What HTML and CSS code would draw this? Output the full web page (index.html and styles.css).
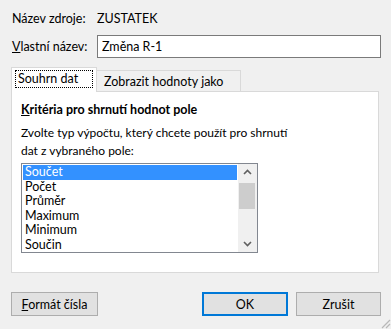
FILE: index.html
```html
<!DOCTYPE html>
<html lang="cs">
<head>
    <meta charset="UTF-8">
    <title>Nastavení pole hodnot</title>
    <link rel="stylesheet" href="styles.css">
</head>
<body>
    <main class="dialog">
        <div class="row source">
            <span class="label">Název zdroje:</span>
            <span>ZUSTATEK</span>
        </div>
        <div class="row name">
            <label class="label" for="custom-name"><u>V</u>lastní název:</label>
            <input id="custom-name" type="text" value="Změna R-1">
        </div>

        <div class="tabs">
            <div class="tab active"><span class="focus">Souhrn dat</span></div>
            <div class="tab">Zobrazit hodnoty jako</div>
        </div>
        <section class="panel">
            <h2><u>K</u>ritéria pro shrnutí hodnot pole</h2>
            <p>Zvolte typ výpočtu, který chcete použít pro shrnutí dat z vybraného pole:</p>
            <div class="listbox">
                <ul>
                    <li class="selected">Součet</li>
                    <li>Počet</li>
                    <li>Průměr</li>
                    <li>Maximum</li>
                    <li>Minimum</li>
                    <li>Součin</li>
                </ul>
                <div class="scrollbar">
                    <svg width="19" height="17" viewBox="0 0 19 17"><path d="M6 10 L9.5 6.5 L13 10" fill="none" stroke="#606060" stroke-width="1.6"/></svg>
                    <div class="thumb"></div>
                    <svg class="down" width="19" height="17" viewBox="0 0 19 17"><path d="M6 7 L9.5 10.5 L13 7" fill="none" stroke="#606060" stroke-width="1.6"/></svg>
                </div>
            </div>
        </section>

        <footer class="buttons">
            <button class="btn format"><u>F</u>ormát čísla</button>
            <div class="right">
                <button class="btn ok">OK</button>
                <button class="btn">Zrušit</button>
            </div>
        </footer>
        <svg class="grip" width="12" height="12" viewBox="0 0 12 12">
            <path d="M11 3 L3 11 M11 7 L7 11" stroke="#b8b8b8" stroke-width="1.2"/>
        </svg>
    </main>
</body>
</html>
```

FILE: styles.css
```css
*{
    box-sizing: border-box;
    margin: 0;
    padding: 0;
}
body{
    background-color: #f0f0f0;
    font-family: Lato, "Open Sans", sans-serif;
    font-size: 12.5px;
    color: #000;
}
.dialog{
    position: relative;
    width: 391px;
    height: 329px;
    padding: 11px 10px 0 11px;
}
.row{
    display: flex;
    align-items: center;
    line-height: 15px;
}
.label{
    width: 86px;
    flex-shrink: 0;
    padding-left: 1px;
}
.row.name{
    margin-top: 9px;
}
.row.name input{
    width: 284px;
    height: 23px;
    border: 1px solid #7a7a7a;
    background: #fff;
    font: inherit;
    padding-left: 4px;
    color: #000;
}
.tabs{
    display: flex;
    align-items: flex-end;
    margin-top: 9px;
    height: 24px;
    position: relative;
    z-index: 1;
}
.tab{
    height: 21px;
    border: 1px solid #d9d9d9;
    border-bottom: none;
    padding: 3px 6px 0;
    line-height: 15px;
    background-color: #f0f0f0;
}
.tab.active{
    width: 86px;
    height: 25px;
    margin-bottom: -1px;
    background-color: #fff;
    padding: 3px 4px 0;
}
.tab.active + .tab{
    border-left: none;
}
.tab:not(.active){
    width: 144px;
    padding-left: 7px;
}
.focus{
    display: block;
    outline: 1px dotted #000;
    padding: 0 2px 1px;
}
.panel{
    width: 368px;
    height: 182px;
    background: #fff;
    border: 1px solid #d9d9d9;
    padding: 10px 9px 0;
}
.panel h2{
    font-size: 12.5px;
    font-weight: bold;
    line-height: 15px;
}
.panel p{
    margin-top: 7px;
    font-size: 12px;
    line-height: 18px;
    width: 270px;
}
.listbox{
    display: flex;
    margin-top: 3px;
    width: 237px;
    height: 90px;
    border: 1px solid #828790;
}
.listbox ul{
    list-style: none;
    flex: 1;
    padding: 1px 1px 0 1px;
    overflow: hidden;
}
.listbox li{
    height: 14.5px;
    line-height: 14.5px;
    padding-left: 2px;
}
.listbox li.selected{
    background-color: #3391ff;
    color: #fff;
}
.scrollbar{
    width: 19px;
    background-color: #f0f0f0;
    display: flex;
    flex-direction: column;
}
.scrollbar svg{
    display: block;
}
.thumb{
    margin: 2px 2px 0 1px;
    height: 26px;
    background-color: #cdcdcd;
}
.scrollbar .down{
    margin-top: auto;
}
.buttons{
    display: flex;
    justify-content: space-between;
    margin-top: 19px;
}
.right{
    display: flex;
    gap: 8px;
}
.btn{
    height: 24px;
    background-color: #e1e1e1;
    border: 1px solid #adadad;
    font: inherit;
    color: #000;
}
.btn.format{
    width: 87px;
}
.right .btn{
    width: 85px;
}
.btn.ok{
    width: 86px;
    border: 2px solid #0078d7;
}
.grip{
    position: absolute;
    right: 0;
    bottom: 0;
}
```
